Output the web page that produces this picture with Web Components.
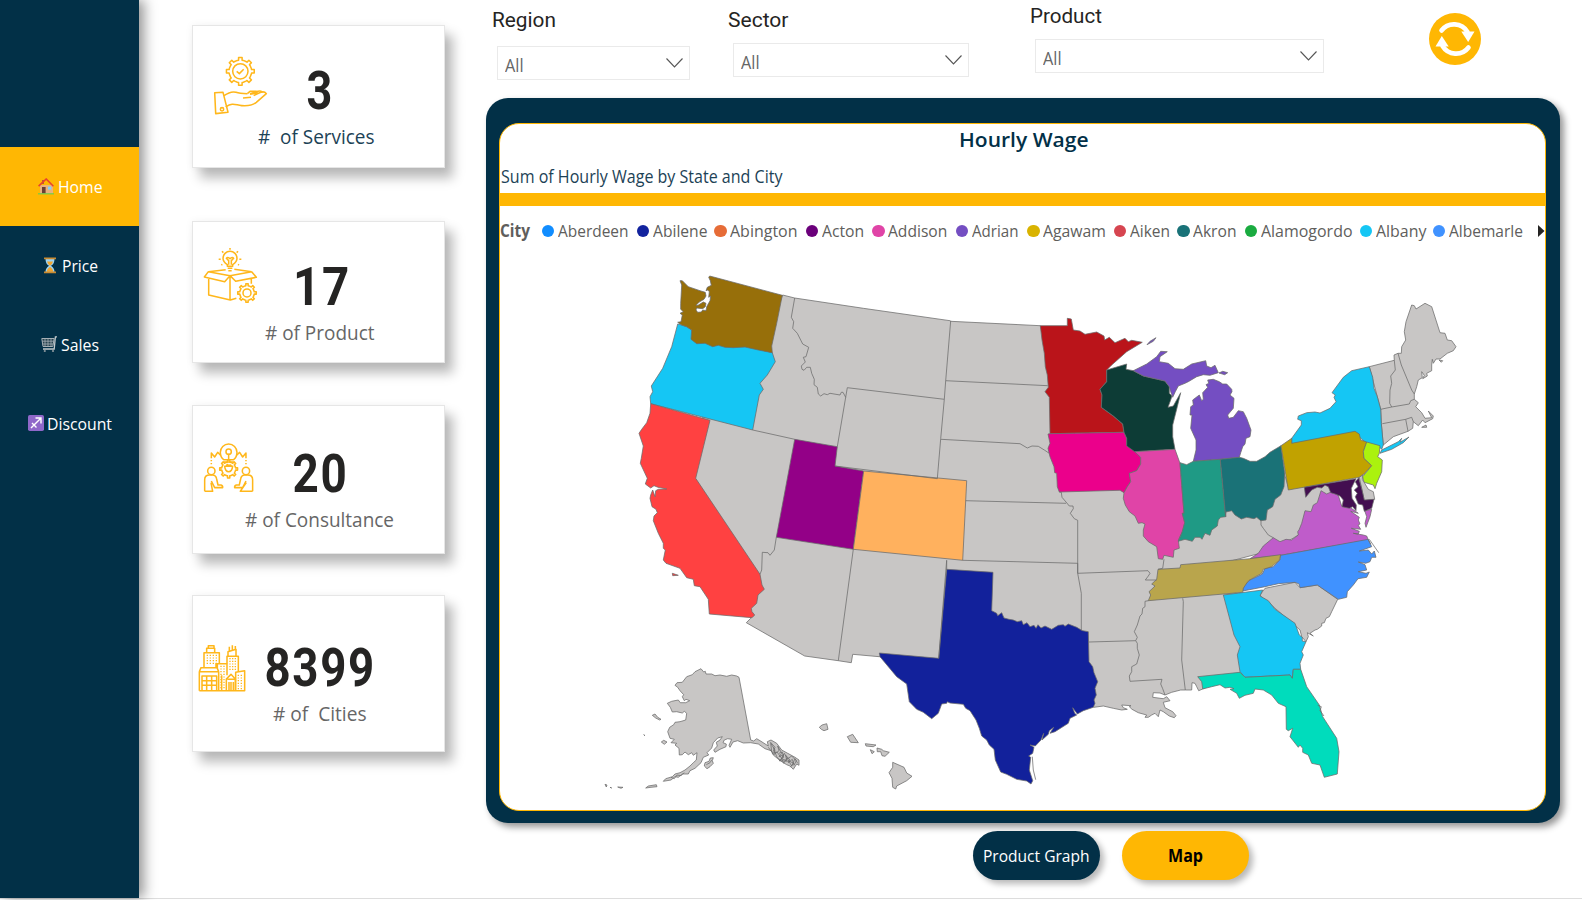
<!DOCTYPE html>
<html lang="en">
<head>
<meta charset="utf-8">
<title>Hourly Wage Dashboard</title>
<style>
html,body{margin:0;height:100%;overflow:hidden;background:#fff}
body{font-family:"Open Sans","Noto Sans",sans-serif}
</style>
</head>
<body>
<wage-dashboard></wage-dashboard>
<script>
const define = (name, html, setup) => customElements.define(name, class extends HTMLElement {
  connectedCallback() {
    if (this.shadowRoot) return;
    const root = this.attachShadow({ mode: 'open' });
    root.innerHTML = typeof html === 'function' ? html(this) : html;
    if (setup) setup(this, root);
  }
});

/* Cog outline centred on cx,cy with n teeth. */
function gear(cx, cy, ro, ri, n, turn = 0) {
  let d = '';
  for (let i = 0; i < n; i++) {
    const a = turn + i * 2 * Math.PI / n, s = 2 * Math.PI / n;
    [[-.34, ri], [-.2, ri], [-.16, ro], [.16, ro], [.2, ri], [.34, ri]].forEach(([t, r]) => {
      d += (d ? 'L' : 'M') + (cx + r * Math.cos(a + t * s)).toFixed(1) + ',' + (cy + r * Math.sin(a + t * s)).toFixed(1);
    });
  }
  return d + 'Z';
}
function grid(x, y, cols, rows, dx, dy) {
  let d = '';
  for (let r = 0; r < rows; r++) for (let c = 0; c < cols; c++) d += `M${x + c * dx},${y + r * dy}h4`;
  return d;
}

const ICONS = {
  service: { box: '100 138 164 178', body: `
    <path d="${gear(182, 184, 42, 34, 8, Math.PI / 8 * 2)}"/><circle cx="182" cy="184" r="23"/><path d="M171,184l8,7 13,-13"/>
    <path d="M105,248l25,-1 15,60 -37,4z"/><circle cx="127" cy="298" r="5"/>
    <path d="M133,257c14,-10 24,-14 36,-10c10,4 20,4 34,4M138,291c22,-14 28,-6 48,-4c22,2 34,-2 44,-10l30,-26c-5,-7 -14,-6 -22,-2l-16,8"/>
    <path d="M203,251l8,-7h18c5,0 5,5 0,6l-18,3M214,262l-24,2M211,251l24,-7c8,-2 12,0 12,4"/>` },
  product: { box: '70 714 164 172', body: `
    <path d="M143,772v-5c-8,-5 -13,-12 -13,-19a21,21 0 0 1 42,0c0,7 -5,14 -13,19v5zM144,778h14M146,785h10M147,767v-12l-7,-7q4,-6 11,1q7,-7 11,-1l-7,7v12"/>
    <path d="M151,717v5M127,727l4,4M175,727l-4,4M117,751h6M179,751h6M125,768l3,-2M178,768l-3,-2"/>
    <path d="M86,788l52,-6M164,781l52,7M86,788l65,12 65,-12M86,788l-12,16 61,14 16,-18 17,17 62,-12 -14,-17M87,808v50l65,15 18,-5M151,800v72M215,810v14"/>
    <path d="${gear(202, 852, 28, 22, 8)}"/><circle cx="202" cy="852" r="12"/>` },
  consult: { box: '68 158 154 154', body: `
    <path d="M130,211c-7,-5 -10,-13 -10,-22a25,25 0 0 1 50,0c0,9 -3,17 -10,22zM130,218h30M145,211v-18"/><circle cx="145" cy="187" r="8"/>
    <path d="M93,207v-16l10,12 9,-14 8,8M197,207v-16l-10,12 -9,-14 -8,8"/><path d="M93,212v16M197,212v16" stroke-dasharray="4 5"/>
    <path d="${gear(145, 239, 27, 21, 8)}"/><path d="M133,231q2,16 12,16q10,0 12,-16zM138,229q4,-8 7,2q4,-8 8,-1"/>
    <circle cx="93" cy="245" r="11"/><path d="M73,306v-35q0,-14 15,-14h8q11,0 13,12l4,18h9q6,2 5,8H103l-10,-20M92,280l5,26H73"/>
    <circle cx="197" cy="245" r="11"/><path d="M217,306v-35q0,-14 -15,-14h-8q-11,0 -13,12l-4,18h-9q-6,2 -5,8H187l10,-20M198,280l-18,26h37"/>` },
  city: { box: '54 762 144 144', body: `
    <path d="M58,902h136V842l-27,5v55M58,902V845h58v57M58,845l5,-12h48l5,12M72,833v-45h46v33M80,788v-13h24v13M85,775v-8h17v8M108,833v-12h33v35M112,821v12M125,856v46"/>
    <path d="M141,821v-22h34v46M144,799v-14l24,-7v21M148,782v-12M157,779v-13M166,776v-8"/>
    <path d="M139,902v-35l14,-14 13,14v35M142,868h22M147,902v-26M153,902v-26M160,902v-26M66,902V858h44v44M66,872h44M66,886h44M80,858v44M95,858v44"/>
    <path d="${grid(80, 796, 4, 4, 9, 8)}${grid(121, 829, 2, 9, 9, 8)}${grid(148, 806, 3, 5, 8, 8)}${grid(173, 856, 2, 6, 9, 8)}" stroke-width="3.400"/>` }
};

const NAV = {
  house: '<path d="M2 7h13v9H2z" fill="#e8b27f"/><path d="M4 2h2v4H4z" fill="#b85c38"/><path d="M.6 8.2 8.2 1l7.2 7.2" fill="none" stroke="#e8432e" stroke-width="1.6"/><path d="M4 9h3.6v6.4H4z" fill="#6b3f35"/><path d="M10 8.600h3.200v3H10z" fill="#7fd0ff"/><path d="M0 15.200h16v1.200H0z" fill="#6fce4a"/>',
  glass: '<path d="M3.500 2h9q0 5-3.500 6.800Q12.500 11 12.500 15h-9q0-4 3.500-6.200Q3.500 7 3.500 2z" fill="#9cd3f2"/><path d="M5 4.500h6Q10.500 7 8 8.800 5.500 7 5 4.500zM8 9.800q3 2 3.500 5h-7q.5-3 3.500-5z" fill="#f2a52e"/><path d="M2 .6h12v1.700H2zM2 14.600h12v1.700H2z" fill="#c98b32"/>',
  cart: '<path d="M.8 2.500h12.400l-1.400 8H2z" fill="#27434f" stroke="#a6b0b6"/><path d="M4 2.500v8M7 2.500v8M10 2.500v8M1 5.200h12M1.500 8h11" stroke="#a6b0b6" stroke-width=".8"/><path d="M16 .8h-1.600L13.200 13H2" fill="none" stroke="#c3cacd" stroke-width="1.300"/><circle cx="3.800" cy="15" r="1.100" fill="#8c989e"/><circle cx="12" cy="15" r="1.100" fill="#8c989e"/>',
  sagit: '<rect width="16" height="16" rx="1.800" fill="#8f68c9"/><path d="M3 13 12.800 3.200M7.500 3H13v5.500M4 8l4.500 4.500" fill="none" stroke="#fff" stroke-width="1.400"/>'
};

/* Map sheets: origin of each survey sheet; sheet units are thirds of a pixel. */
const SHEETS = { A: [630, 260], B: [630, 480], C: [930, 300], D: [930, 540], E: [1240, 290], F: [1230, 470], G: [595, 660] };
function trace(src) {
  let o, d = '', start = true;
  src.trim().split(/\s+/).forEach(t => {
    if (SHEETS[t]) { o = SHEETS[t]; return; }
    if (t === '/') { start = true; return; }
    const [x, y] = t.split(',').map(Number);
    d += (start ? 'M' : 'L') + (o[0] + x / 3).toFixed(1) + ' ' + (o[1] + y / 3).toFixed(1);
    start = false;
  });
  return d;
}
const GREY = '#c8c6c5';
const LAND = [
  [GREY, 'A 458,105 494,114 700,145 960,182 C 62,64 331,77 400,300 450,450 640,500 700,560 820,560 920,600 E 50,640 100,600 131,545 145,590 195,590 230,585 258,583 272,590 280,612 240,660 200,720 150,750 60,790 D 800,90 900,150 1000,200 1000,380 900,415 850,430 818,447 806,452 800,440 795,430 786,428 785,450 766,450 752,450 725,457 705,465 690,459 670,458 668,472 700,476 710,470 720,482 700,487 705,503 728,515 738,527 733,533 718,528 700,515 690,510 685,530 675,520 665,525 655,532 645,532 650,525 625,518 606,508 598,500 603,497 575,495 580,503 592,508 575,510 550,505 520,498 492,502 400,450 300,400 100,400 B 960,560 800,535 748,530 668,523 664,548 625,542 524,528 349,428 362,415 350,380 330,310 150,40 A 180,650 200,500 220,470 330,480 350,400 380,300 400,250'],
  [GREY, 'E 388,230 463,211 462,195 474,190 484,190 485,170 497,150 493,125 498,95 515,45 523,47 528,57 555,40 575,50 600,128 615,130 622,150 635,152 648,170 640,182 622,190 600,207 588,207 580,220 577,208 575,225 575,242 560,250 562,258 548,266 553,256 545,245 547,263 535,270 530,290 523,312 523,328 535,338 527,350 545,368 555,385 575,383 565,363 580,378 578,386 555,398 548,390 535,407 520,395 518,415 504,424 460,440 430,465 424,400 422,358'],
  [GREY, 'E 545,412 558,405 560,412 / 597,210 608,212 604,217'],
  [GREY, 'F 90,375 105,355 195,337 210,353 262,345 323,388 305,425 298,440 288,445 283,458 275,460 275,468 262,478 255,480 240,490 250,498 232,488 235,500 228,515 215,500 210,480 190,462 130,410 115,395 95,382'],
  ['#15c6f4', 'A 143,192 155,195 170,200 185,210 240,230 427,278 436,305 412,345 390,370 400,388 388,405 368,510 62,431 60,410 68,395 64,378 98,325 125,260'],
  ['#976f0a', 'A 239,48 457,106 440,190 425,258 427,278 385,270 345,261 310,263 285,262 265,256 248,260 225,250 200,251 183,238 185,210 170,200 155,195 143,187 153,185 157,165 150,160 160,155 152,148 152,130 155,75 150,62 157,62 175,80 210,92 226,97 228,108 222,118 208,126 198,136 204,136 220,126 228,130 226,140 218,146 200,144 198,150 203,157 214,156 218,150 228,152 230,140 240,122 242,108 236,112 238,95 233,90 228,92 232,82 244,76 241,62 236,52'],
  ['#ff4141', 'A 62,431 240,481 197,655 B 390,283 396,315 403,328 384,345 380,370 364,385 366,395 374,405 366,413 238,402 235,358 210,320 193,317 190,298 170,293 150,265 108,250 100,240 106,210 100,205 100,190 85,160 70,122 72,108 82,98 78,88 66,80 60,55 62,45 A 68,690 75,710 77,692 85,688 110,687 84,682 72,677 62,684 46,672 52,655 31,610 34,595 40,558 27,520 35,508 50,488 60,460 / B 127,280 145,286 128,287'],
  ['#930087', 'A 494,538 622,560 615,618 701,633 B 670,208 439,172'],
  ['#ffb15e', 'A 701,633 1010,662 B 998,241 670,208'],
  ['#12219b', 'D 50,88 189,97 185,212 200,220 203,227 215,218 222,234 237,238 250,240 262,245 275,242 280,254 291,248 300,260 312,256 318,265 324,254 333,264 345,258 365,268 385,256 400,254 405,259 415,252 440,262 450,268 458,272 475,275 477,365 488,380 492,398 503,425 495,445 499,465 492,480 495,490 490,502 460,512 442,522 436,514 428,503 434,520 440,525 420,535 415,550 375,575 360,580 371,562 358,572 355,583 336,600 341,580 333,600 316,618 300,615 312,622 308,640 296,648 302,652 298,690 308,722 303,732 290,723 260,718 230,703 212,696 196,660 192,628 178,615 170,600 155,588 148,565 138,540 120,512 107,505 100,493 60,489 52,485 50,490 35,492 B 925,700 905,716 880,697 860,688 838,665 830,612 800,590 750,530 748,519 926,535'],
  ['#ba141a', 'C 331,77 412,77 412,55 424,57 430,90 450,93 465,103 500,96 522,108 524,120 538,112 555,128 585,115 595,125 605,121 637,127 590,155 545,195 530,210 530,245 510,268 516,285 514,322 550,348 578,372 582,397 360,401 358,292 345,275 355,262 352,225 346,200 343,160 336,120'],
  ['#eb008b', 'C 360,401 582,397 590,415 590,435 615,450 632,472 632,492 620,512 598,520 602,545 592,560 582,578 570,571 388,576 382,560 380,520 374,518 372,500 360,470 354,445 360,430 354,402'],
  ['#0d3c36', 'C 530,210 590,192 588,208 610,212 640,228 705,243 718,260 718,280 726,288 722,300 714,322 730,318 752,278 742,320 728,375 728,410 735,448 614,455 590,438 590,415 582,397 578,372 550,348 514,322 516,285 510,268 530,245'],
  ['#744ec2', 'C 610,212 650,192 680,170 692,154 712,155 690,170 688,185 715,190 735,206 760,208 785,192 827,182 830,198 843,203 855,196 865,218 840,226 820,224 800,230 775,245 765,250 745,258 736,275 728,292 722,275 718,260 705,243 640,228 / 878,214 893,218 884,224 867,219 / 651,134 660,124 678,113 670,124'],
  ['#744ec2', 'C 833,240 850,238 868,245 878,252 890,252 905,268 906,275 900,285 912,295 910,325 893,345 896,355 910,352 925,332 940,335 950,355 963,390 960,410 948,415 945,432 938,440 932,458 928,472 871,478 790,484 798,450 798,420 782,385 786,345 780,345 782,320 790,315 788,300 808,285 815,302 820,298 818,278 833,262 828,254 836,250'],
  ['#e044a7', 'C 614,455 735,448 750,490 762,640 757,640 764,668 757,695 745,720 748,745 732,750 730,772 702,766 698,778 685,776 680,740 655,725 640,708 640,690 645,672 636,668 625,670 615,648 598,635 586,615 580,595 582,578 592,560 602,545 598,520 620,512 632,492 632,472'],
  ['#1f9a85', 'C 750,488 770,494 790,484 871,478 887,650 872,652 865,660 862,678 845,690 840,706 825,700 816,718 810,712 795,712 787,724 765,718 745,724 757,695 764,668 757,640 762,640'],
  ['#1a7277', 'C 871,478 928,472 E 10,505 30,514 50,514 75,500 90,487 123,467 134,548 132,590 122,615 105,628 98,650 82,660 78,690 62,692 50,682 42,686 20,682 4,687 C 915,645 905,632 888,636 887,650'],
  ['#15c6f4', 'E 155,445 184,405 184,392 173,388 175,378 200,368 225,366 240,369 270,355 288,335 282,322 286,315 276,308 310,262 335,242 388,230 398,262 402,295 412,320 422,358 424,400 430,465 425,478 417,470 380,460 345,430 155,462 / 420,490 425,480 475,455 485,445 480,457 507,441 490,458 455,478'],
  ['#c1a200', 'E 123,467 155,445 155,460 345,424 358,432 362,450 380,456 370,485 372,505 395,527 372,552 358,562 145,600'],
  ['#abf20e', 'E 380,456 420,467 418,490 413,500 427,510 425,545 410,580 405,596 400,585 372,577 368,560 395,527 372,505 370,485'],
  [GREY, 'E 358,562 368,555 367,568 385,598 400,605 404,628 373,632 366,600'],
  ['#bf5cca', 'F 60,266 85,250 100,228 130,203 150,215 168,208 185,210 205,195 203,185 207,180 215,160 225,122 243,125 250,105 262,98 273,62 290,72 305,65 325,76 335,108 360,112 385,130 362,124 388,142 385,150 390,162 384,165 392,178 364,175 388,184 385,192 370,190 400,195 410,198 415,210 152,256 / 404,122 425,118 420,140 408,172 405,160 410,140'],
  ['#430e50', 'E 193,592 348,566 342,578 334,595 336,625 349,645 348,662 338,650 328,655 306,650 310,630 300,618 285,612 272,608 265,590 255,586 245,594 232,592 215,600 197,622 / 356,563 366,600 373,630 402,628 395,655 373,664 368,645 355,642 346,620 352,610 343,600 354,590 346,575'],
  ['#4092ff', 'F 152,256 415,208 425,230 388,243 415,240 425,252 433,243 438,262 425,262 420,275 407,280 385,276 405,284 410,300 385,305 408,310 418,306 410,322 384,326 370,345 352,365 350,382 325,388 262,345 210,353 207,342 195,337 145,341 105,350 38,363 40,350 60,330 97,312 105,295 130,290 150,270'],
  ['#b9a54c', 'D 655,182 662,165 657,155 675,138 665,132 680,118 684,88 750,84 752,74 960,56 1052,44 1048,60 1025,80 1000,88 995,100 955,122 940,145 938,157'],
  ['#15c6f4', 'D 880,165 998,150 990,168 1015,182 1035,208 1095,250 1108,285 1117,292 1117,303 1128,305 1115,335 1120,345 1110,370 1112,388 1090,388 1087,415 1080,405 945,412 930,395 922,345 930,320 912,285'],
  ['#00dcbc', 'D 803,410 930,397 945,412 1080,405 1087,415 1090,388 1112,388 1130,440 1168,495 1178,530 1220,595 1227,635 1222,702 1183,712 1170,675 1145,670 1135,645 1118,637 1118,625 1110,615 1105,622 1080,590 1088,565 1075,572 1069,568 1068,500 1045,490 1025,465 1000,450 975,447 970,460 945,466 928,475 920,460 900,448 912,446 900,442 885,444 870,434 845,440 818,447 815,425'],
  [GREY, 'G 318,26 326,36 331,34 333,42 350,42 360,47 375,45 395,49 410,45 425,48 432,52 467,240 476,243 485,236 498,244 520,258 517,245 528,240 545,250 560,270 578,280 600,292 612,300 612,316 605,312 595,328 585,318 575,314 562,306 548,296 535,285 528,272 510,266 490,252 467,248 445,249 428,242 414,246 405,262 402,256 410,238 398,236 388,240 384,248 394,252 393,260 375,268 360,277 356,270 367,258 364,247 375,240 382,230 368,234 355,248 350,264 336,278 341,285 325,292 318,308 300,325 285,332 280,342 262,342 250,352 240,350 228,360 205,364 212,356 232,350 240,342 255,338 270,330 285,318 295,308 304,300 306,278 295,286 290,278 280,284 270,276 262,284 253,285 252,265 240,255 245,250 228,248 238,238 225,235 218,215 224,202 236,194 240,187 255,185 272,180 275,160 268,154 262,159 245,155 232,156 226,142 217,130 230,124 250,120 256,128 272,128 284,122 273,118 268,122 262,110 266,104 255,92 248,82 240,76 246,68 262,67 275,50 292,44 300,35'],
  [GREY, 'G 330,308 342,304 346,294 355,293 352,302 355,310 345,320 336,326 328,318 / 172,166 180,162 188,172 198,178 194,180 182,174 / 199,246 206,241 216,246 208,253 / 152,384 160,378 184,374 186,380 168,382 / 68,381 84,382 78,385 / 30,373 36,375 34,381 / 45,382 50,384 / 146,224 150,227'],
  [GREY, 'B 568,742 576,735 590,731 594,748 582,752 574,748 / 652,770 668,763 685,788 662,787 / 706,791 738,795 730,800 708,798 / 721,809 733,815 726,821 / 741,804 755,808 760,812 778,817 765,829 756,827 752,815 742,815 / 788,847 822,862 830,879 846,889 830,902 800,918 797,927 788,922 786,895 777,878 788,862']
];
const BORDERS = [
  'A 494,114 484,172 491,185 488,205 502,220 518,252 536,262 528,290 520,292 526,306 514,318 516,328 522,331 530,322 541,322 545,340 553,358 552,374 562,382 565,402 572,408 582,401 592,404 600,400 630,405 634,397 639,397 647,412',
  'A 622,560 652,383 943,418', 'A 962,182 947,362 943,418 932,536 922,656', 'A 615,618 922,656', 'A 368,510 494,538',
  'B 439,172 433,210 420,226 414,218 397,217 395,270 390,283', 'A 947,362 C 353,257',
  'C 33,418 270,431 292,444 306,438 325,439 343,450 358,460', 'C 107,602 408,610',
  'C 388,576 394,577 396,592 408,606 418,618 429,618 430,626 421,640 433,656 443,661 443,820', 'C 98,781 443,790',
  'B 670,208 625,542', 'B 950,240 926,535', 'D 50,62 50,90', 'D 443,100 654,92 660,100 655,108 646,120 680,120', 'D 702,58 698,85 684,88',
  'D 443,70 443,100 454,160 454,272', 'D 477,306 617,302',
  'D 655,182 645,184 645,200 638,205 636,222 630,228 622,255 613,275 622,292 617,302 622,310 622,325 628,345 620,372 605,380 605,395 598,408 600,424 696,418 692,432 698,446 705,465',
  'D 758,175 760,185 755,360 766,450', 'F 93,150 93,165 100,175 115,195 130,203',
  'E 463,211 466,240 452,258 455,280 450,300 449,340 455,351', 'E 474,190 484,225 515,300 523,312', 'E 422,358 455,351 508,342 512,332 523,328',
  'E 427,401 497,388 515,382 520,395', 'E 497,388 504,424', 'D 307,650 310,690 317,719', 'F 418,208 446,248', 'F 415,210 422,222',
  'G 520,262 530,275 527,250 540,270 536,284 552,272 548,258 560,280 552,290 566,284 560,296 575,302 572,286 585,300 580,308 592,298 597,316 604,302 590,288 578,296 568,280 556,302 545,290 535,262',
  'G 526,246 540,262 532,280 546,276 558,292 566,310 576,294 590,318 600,296 608,310', 'D 1163,496 1174,500 1170,512 1182,528', 'G 552,280 562,276 566,292 552,302 584,304 596,310 586,322',
  'G 334,314 345,308 350,300', 'G 228,352 238,356 246,345 258,347 268,338'
];

define('state-map', () => `
<style>:host{display:block;width:1044px;height:553px}svg{display:block}</style>
<svg width="1044" height="553" viewBox="499 254 1044 553" stroke="#6b6b6b" stroke-width=".75" stroke-linejoin="round">
${LAND.map(([c, p]) => `<path fill="${c}" d="${trace(p).replace(/(.)M/g, '$1ZM')}Z"/>`).join('')}
${BORDERS.map(p => `<path fill="none" d="${trace(p)}"/>`).join('')}
</svg>`);

define('kpi-card', el => {
  const ic = ICONS[el.getAttribute('icon')], [ix, iy, iw, ih] = el.getAttribute('place').split(' ');
  return `
<style>
:host{box-sizing:border-box;display:grid;justify-items:center;align-items:start;background:#fff;border:1.500px solid #e6e6e6;box-shadow:8px 10px 11px rgba(0,0,0,.27),0 0 8px rgba(0,0,0,.05)}
svg,.copy{grid-area:1/1}
svg{justify-self:start;margin:${iy}px 0 0 ${ix}px;fill:none;stroke:#ffb71b;stroke-width:4.600;stroke-linejoin:round}
.copy{display:flex;flex-direction:column;align-items:center;padding-top:var(--top)}
.value{font:700 53.500px/40px Roboto,sans-serif;color:#252423;height:40px;letter-spacing:2px}
.label{font-size:19.500px;line-height:24px;height:24px;margin-top:14.500px;color:var(--ink,#666)}
</style>
<svg width="${iw}" height="${ih}" viewBox="${ic.box}">${ic.body}</svg>
<div class="copy"><div class="value"><slot name="value"></slot></div><div class="label"><slot></slot></div></div>`;
});

define('nav-item', el => `
<style>
:host{display:flex;align-items:center;justify-content:center;height:79px;color:#fff;font-size:17px;line-height:24px;box-sizing:border-box;padding-left:.5px}
:host([active]){background:#ffb703}
svg{margin-right:var(--gap,4px);flex:none}
</style>
<svg width="16" height="17" viewBox="0 0 16 17">${NAV[el.getAttribute('icon')]}</svg><slot></slot>`);

define('side-nav', `
<style>:host{display:block;box-sizing:border-box;width:139.300px;height:898px;padding-top:147px;background:#023047;box-shadow:5px 0 12px rgba(0,0,0,.42);flex:none}</style>
<nav>
<nav-item icon="house" active><fit-text w="44.500">Home</fit-text></nav-item>
<nav-item icon="glass" style="--gap:4px"><fit-text w="36">Price</fit-text></nav-item>
<nav-item icon="cart" style="--gap:3.500px"><fit-text w="38">Sales</fit-text></nav-item>
<nav-item icon="sagit" style="--gap:3.500px"><fit-text w="65">Discount</fit-text></nav-item>
</nav>`);

define('slicer-box', el => `
<style>
:host{display:block}
.label{font:400 19.500px/24px Roboto,sans-serif;color:#252423;height:24px}
.box{box-sizing:border-box;display:flex;align-items:center;justify-content:space-between;height:34px;margin:var(--gap) 0 0 5.500px;padding:3px 6px 0 6.500px;border:1.500px solid #eaeaea;font-size:17.500px;line-height:24px;color:#666}
svg{margin-top:-2.500px}
</style>
<div class="label"><fit-text w="${el.getAttribute('w')}">${el.getAttribute('name')}</fit-text></div>
<div class="box"><fit-text w="18.500"><slot></slot></fit-text><svg width="17" height="10" fill="none" stroke="#555" stroke-width="1.100"><path d="M.5.500 8.500 9l8-8.500"/></svg></div>`);

define('reset-button', `
<style>:host{display:block}svg{display:block}</style>
<svg width="52" height="52" viewBox="0 0 52 52"><circle cx="26" cy="26" r="26" fill="#ffb703"/>
<g><path d="M12.500 17.500A15.800 15.800 0 0 1 38.500 19" fill="none" stroke="#fff" stroke-width="4.600" stroke-linecap="round"/><path d="M32.300 18.500h13.200l-6.300 10.500z" fill="#fff"/></g>
<g transform="rotate(180 26 26)"><path d="M12.500 17.500A15.800 15.800 0 0 1 38.500 19" fill="none" stroke="#fff" stroke-width="4.600" stroke-linecap="round"/><path d="M32.300 18.500h13.200l-6.300 10.500z" fill="#fff"/></g></svg>`);

const CITIES = [['Aberdeen', '#118dff', 70.5, 95], ['Abilene', '#12239e', 54.5, 77.5], ['Abington', '#e66c37', 67.5, 91.4], ['Acton', '#6b007b', 42.2, 66.4], ['Addison', '#e044a7', 59.3, 83.8], ['Adrian', '#744ec2', 46.5, 71.3], ['Agawam', '#d9b300', 63, 86.3], ['Aiken', '#d64550', 40, 63.8], ['Akron', '#197278', 43.5, 67.4], ['Alamogordo', '#1aab40', 91.5, 115.1], ['Albany', '#15c6f4', 50.4, 72.7], ['Albemarle', '#4092ff', 74, 105.5]];
define('city-legend', `
<style>
:host{display:flex;align-items:center;height:24px;font-size:17px;line-height:24px;color:#605e5c;padding-left:.5px}
b{width:41.500px;font-weight:700}
.item{display:flex;align-items:center;flex:none}
i{width:12.500px;height:12.500px;border-radius:50%;margin-right:3.500px}
</style>
<b><fit-text w="30">City</fit-text></b>
${CITIES.map(([n, c, w, s]) => `<span class="item" style="width:${s}px"><i style="background:${c}"></i><fit-text w="${w}">${n}</fit-text></span>`).join('')}
<svg width="7" height="12"><path d="M0 0 6.500 6 0 12z" fill="#252423"/></svg>`);

define('wage-panel', `
<style>
:host{box-sizing:border-box;display:block;width:1073.500px;height:725.500px;padding:25px 14px 12px 12.500px;border-radius:22px;background:#023047;box-shadow:4px 4px 7px rgba(0,0,0,.42)}
section{box-sizing:border-box;height:688.500px;border:1.500px solid #ffb703;border-radius:20px;background:#fff;overflow:hidden}
h2{margin:2px 0 0;height:26px;text-align:center;font-size:20.500px;line-height:26px;font-weight:600;color:#023047}
p{margin:12.500px 0 0 .8px;height:24px;font-size:17.500px;line-height:24px;color:#1c4256}
hr{margin:5px 0 0;border:0;height:12.700px;background:#ffb703}
city-legend{margin-top:13.300px}
state-map{margin:11.200px 0 0 -1px}
</style>
<section>
<h2><fit-text w="129.500">Hourly Wage</fit-text></h2>
<p><fit-text w="281.500">Sum of Hourly Wage by State and City</fit-text></p>
<hr>
<city-legend></city-legend>
<state-map></state-map>
</section>`);

define('pill-button', `
<style>
:host{display:flex;align-items:center;justify-content:center;box-sizing:border-box;width:126.300px;height:48.500px;padding:1.500px 0 0 .5px;border-radius:25px;background:#023047;color:#fff;font-size:17px;line-height:24px;box-shadow:4px 4px 6px rgba(0,0,0,.28)}
:host([active]){background:#ffb703;color:#000;font-weight:700}
</style><slot></slot>`);

define('wage-dashboard', `
<style>
:host{display:flex;width:1582px;height:898px;border-bottom:1px solid #ddd;background:#fff}
.cards{display:flex;flex-direction:column;width:252.700px;margin-left:53px;padding-top:25px;flex:none}
.cards>:nth-child(1){height:142.700px}
.cards>:nth-child(2){height:142.300px;margin-top:53.300px}
.cards>:nth-child(3){height:148.700px;margin-top:41.700px}
.cards>:nth-child(4){height:156.400px;margin-top:41.600px}
main{margin-left:41.500px;display:flex;flex-direction:column}
.filters{display:flex;height:97.500px;align-items:flex-start;padding-left:5.500px}
.filters>:nth-child(1){width:198px;margin-top:9px;margin-right:38px;--gap:13px}
.filters>:nth-child(2){width:240.700px;margin-top:9px;margin-right:61.300px;--gap:10px}
.filters>:nth-child(3){width:294.500px;margin-top:5px;margin-right:104.500px;--gap:10px}
.filters>:nth-child(4){margin-top:13px}
.pills{display:flex;gap:22.900px;padding:8.300px 0 0 486.800px}
</style>
<side-nav></side-nav>
<div class="cards">
<kpi-card icon="service" place="20 29.5 54.7 59.3" style="--top:44.700px;--ink:#1c4256"><fit-text slot="value" w="27.500" dx="1.500">3</fit-text><fit-text w="116.500" dx="-2">#  of Services</fit-text></kpi-card>
<kpi-card icon="product" place="10 25.5 54.7 57.3" style="--top:45px"><fit-text slot="value" w="58" dx="3">17</fit-text><fit-text w="109.500" dx="1">#&#32;of Product</fit-text></kpi-card>
<kpi-card icon="consult" place="9.5 36 51.3 51.3" style="--top:48px"><fit-text slot="value" w="56" dx="1.500">20</fit-text><fit-text w="149" dx="1">#&#32;of Consultance</fit-text></kpi-card>
<kpi-card icon="city" place="4.5 47.5 48 48" style="--top:51.500px"><fit-text slot="value" w="111.500" dx="1.500">8399</fit-text><fit-text w="93.500" dx="1">#&#32;of  Cities</fit-text></kpi-card>
</div>
<main>
<div class="filters">
<slicer-box name="Region" w="64">All</slicer-box>
<slicer-box name="Sector" w="60.500">All</slicer-box>
<slicer-box name="Product" w="72">All</slicer-box>
<reset-button></reset-button>
</div>
<wage-panel></wage-panel>
<div class="pills"><pill-button><fit-text w="106.500">Product Graph</fit-text></pill-button><pill-button active><fit-text w="35">Map</fit-text></pill-button></div>
</main>`);

/* Sets a run of text to a fixed width by condensing or widening it. */
define('fit-text', el => `<style>:host{display:inline-block;vertical-align:top;width:${el.getAttribute('w')}px}span{display:inline-block;vertical-align:top;white-space:pre;transform-origin:0 50%}</style><span><slot></slot></span>`, (el, root) => {
  const span = root.querySelector('span'), w = +el.getAttribute('w');
  const nat = span.getBoundingClientRect().width;
  if (nat) span.style.transform = `translateX(${el.getAttribute('dx') || 0}px) scaleX(${w / nat})`;
});
</script>
</body>
</html>
